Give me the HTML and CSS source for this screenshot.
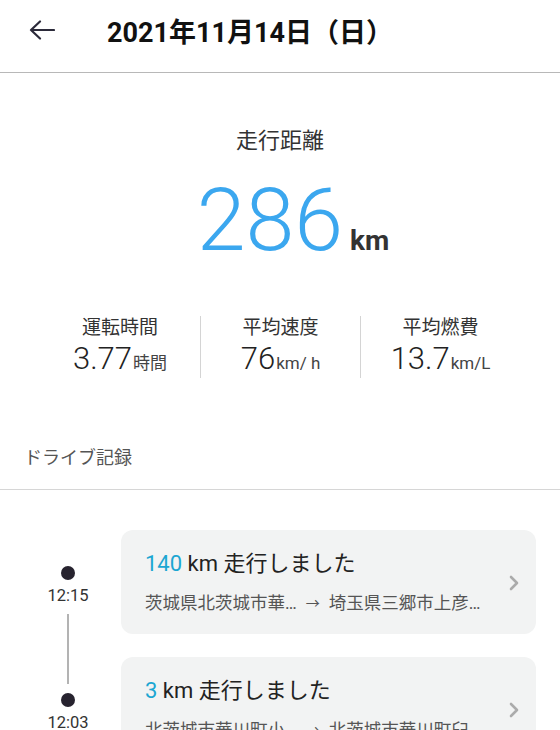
FILE: index.html
```html
<!DOCTYPE html>
<html lang="ja">
<head>
    <meta charset="UTF-8">
    <meta name="viewport" content="width=device-width, initial-scale=1.0">
    <title>ドライブ記録</title>
    <link rel="stylesheet" href="styles.css">
</head>
<body>
    <header class="app-bar">
        <svg class="back-icon" width="26" height="20" viewBox="0 0 26 20">
            <path d="M2 10 H25 M11 1.5 L2 10 L11 18.5" fill="none" stroke="#2b2a3a" stroke-width="2.2" stroke-linecap="round" stroke-linejoin="round"/>
        </svg>
        <h1 class="app-title">2021年11月14日（日）</h1>
    </header>

    <section class="summary">
        <p class="summary-label">走行距離</p>
        <p class="distance"><span class="distance-num">286</span><span class="distance-unit">km</span></p>

        <div class="stats">
            <div class="stat">
                <div class="stat-label">運転時間</div>
                <div class="stat-value">3.77<span class="stat-unit">時間</span></div>
            </div>
            <div class="stat">
                <div class="stat-label">平均速度</div>
                <div class="stat-value">76<span class="stat-unit">km/ h</span></div>
            </div>
            <div class="stat">
                <div class="stat-label">平均燃費</div>
                <div class="stat-value">13.7<span class="stat-unit">km/L</span></div>
            </div>
        </div>
    </section>

    <h2 class="section-title">ドライブ記録</h2>

    <ul class="timeline">
        <li class="trip">
            <div class="trip-time">
                <span class="seg seg-top"></span>
                <span class="dot"></span>
                <span class="time">12:15</span>
                <span class="seg seg-bottom"></span>
            </div>
            <div class="trip-card">
                <div class="trip-body">
                    <div class="trip-title"><span class="trip-km">140</span> km 走行しました</div>
                    <div class="trip-route">
                        <span>茨城県北茨城市華…</span>
                        <span class="route-arrow">→</span>
                        <span>埼玉県三郷市上彦…</span>
                    </div>
                </div>
                <svg class="chevron" width="12" height="18" viewBox="0 0 12 18">
                    <path d="M3 3 L9 9 L3 15" fill="none" stroke="#ababab" stroke-width="2.6" stroke-linecap="round" stroke-linejoin="round"/>
                </svg>
            </div>
        </li>
        <li class="trip">
            <div class="trip-time">
                <span class="seg seg-top"></span>
                <span class="dot"></span>
                <span class="time">12:03</span>
                <span class="seg seg-bottom"></span>
            </div>
            <div class="trip-card">
                <div class="trip-body">
                    <div class="trip-title"><span class="trip-km">3</span> km 走行しました</div>
                    <div class="trip-route">
                        <span>北茨城市華川町小…</span>
                        <span class="route-arrow">→</span>
                        <span>北茨城市華川町臼…</span>
                    </div>
                </div>
                <svg class="chevron" width="12" height="18" viewBox="0 0 12 18">
                    <path d="M3 3 L9 9 L3 15" fill="none" stroke="#ababab" stroke-width="2.6" stroke-linecap="round" stroke-linejoin="round"/>
                </svg>
            </div>
        </li>
    </ul>
</body>
</html>
```

FILE: styles.css
```css
html, body {
    height: 730px;
    overflow: hidden;
}

body {
    margin: 0;
    background: #fff;
    font-family: Roboto, "Noto Sans CJK JP", sans-serif;
    color: #222;
}

p, h1, h2, ul {
    margin: 0;
    padding: 0;
}

.app-bar {
    display: flex;
    align-items: center;
    height: 60px;
    padding: 0 0 12px 29px;
    border-bottom: 1px solid #b8b8b8;
}

.back-icon {
    display: block;
}

.app-title {
    margin-left: 52px;
    font-size: 27px;
    font-weight: bold;
    color: #111;
}

.summary {
    padding-top: 53px;
    text-align: center;
}

.summary-label {
    font-size: 22px;
    line-height: 30px;
    color: #333;
}

.distance {
    margin-top: 18px;
    padding-left: 26px;
    line-height: 92px;
}

.distance-num {
    font-size: 88px;
    font-weight: 300;
    color: #3ba7ef;
}

.distance-unit {
    margin-left: 7px;
    font-size: 28px;
    font-weight: bold;
    color: #333;
}

.stats {
    display: grid;
    grid-template-columns: repeat(3, 160px);
    justify-content: center;
    margin-top: 25px;
}

.stat {
    height: 62px;
}

.stat + .stat {
    border-left: 1px solid #d4d4d4;
}

.stat-label {
    font-size: 19px;
    line-height: 24px;
    color: #333;
}

.stat-value {
    font-size: 31px;
    font-weight: 300;
    line-height: 38px;
    color: #222;
}

.stat-unit {
    margin-left: 1px;
    font-size: 17px;
    font-weight: normal;
    color: #444;
}

.section-title {
    margin-top: 68px;
    padding: 0 0 19px 24px;
    font-size: 18px;
    font-weight: normal;
    line-height: 24px;
    color: #555;
    border-bottom: 1px solid #d6d6d6;
}

.timeline {
    list-style: none;
    padding-top: 40px;
}

.trip {
    display: flex;
}

.trip-time {
    display: flex;
    flex-direction: column;
    align-items: center;
    width: 106px;
    padding-left: 15px;
    flex-shrink: 0;
}

.seg {
    width: 2px;
    background: #b3b3b3;
}

.seg-top {
    height: 27px;
    margin-bottom: 9px;
}

.trip:first-child .seg-top {
    visibility: hidden;
}

.seg-bottom {
    flex: 1;
    margin-top: 8px;
}

.dot {
    width: 14px;
    height: 14px;
    border-radius: 50%;
    background: #27232f;
}

.time {
    margin-top: 6px;
    font-size: 16.5px;
    line-height: 20px;
    color: #333;
}

.trip-card {
    display: flex;
    align-items: center;
    flex: 1;
    margin: 0 24px 23px 0;
    padding: 20px 16px 19px 24px;
    background: #f2f3f3;
    border-radius: 12px;
}

.trip-body {
    flex: 1;
    min-width: 0;
}

.trip-title {
    font-size: 22px;
    line-height: 28px;
    color: #222;
}

.trip-km {
    color: #1ca6d2;
}

.trip-route {
    display: flex;
    gap: 9px;
    margin-top: 13px;
    font-size: 17.5px;
    line-height: 24px;
    color: #555;
    white-space: nowrap;
}

.route-arrow {
    font-size: 14px;
}

.chevron {
    display: block;
    flex-shrink: 0;
}
```
